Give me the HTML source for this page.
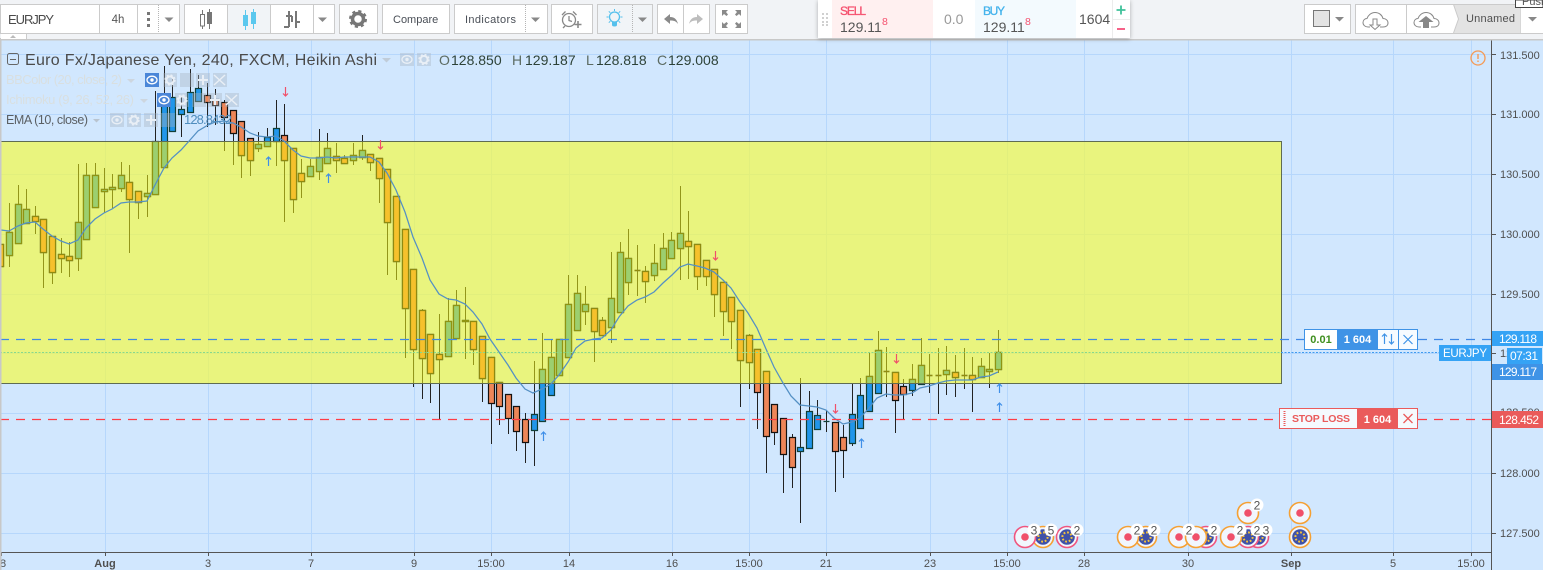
<!DOCTYPE html>
<html><head><meta charset="utf-8"><title>EURJPY</title>
<style>
html,body{margin:0;padding:0;background:#d1e7fe;overflow:hidden}
svg{display:block;font-family:"Liberation Sans",Arial,sans-serif}
</style></head><body>
<svg id="s" xmlns="http://www.w3.org/2000/svg" width="1543" height="570" viewBox="0 0 1543 570">
<defs>
<clipPath id="yc"><rect x="0" y="141" width="1281" height="242"/></clipPath>
<filter id="sh" x="-5%" y="-20%" width="110%" height="150%"><feDropShadow dx="0" dy="1" stdDeviation="2" flood-color="#000" flood-opacity=".3"/></filter>
<g id="dotP"><circle r="10.5" fill="#f1f6fd" stroke="currentColor" stroke-width="1.6"/><circle r="3.8" fill="#f0506a"/></g>
<g id="flagP"><circle r="10.5" fill="#f1f6fd" stroke="currentColor" stroke-width="1.6"/><circle r="7.8" fill="#3f51a8"/><circle r="4.6" fill="none" stroke="#f5c33b" stroke-width="2" stroke-dasharray="1.8 1.8"/></g>
<g id="eyeI"><ellipse rx="5" ry="3.800" fill="none" stroke="#e9eff6" stroke-width="1.300"/><circle r="1.700" fill="#e9eff6"/></g>
<g id="gearI"><circle r="3.600" fill="none" stroke="#e9eff6" stroke-width="2"/><circle r="5" fill="none" stroke="#e9eff6" stroke-width="1.300" stroke-dasharray="2 2"/></g>
</defs>
<rect width="1543" height="570" fill="#d1e7fe"/>
<!-- grid -->
<path stroke="#b6d7fc" stroke-width="1" fill="none" d="M105.5 40V552M208.5 40V552M311.5 40V552M414.5 40V552M491.5 40V552M569.5 40V552M672.5 40V552M749.5 40V552M826.5 40V552M930.5 40V552M1007.5 40V552M1084.5 40V552M1188.5 40V552M1291.5 40V552M1393.5 40V552M1471.5 40V552M0 54.5H1491M0 114.5H1491M0 174.5H1491M0 234.5H1491M0 294.5H1491M0 353.5H1491M0 413.5H1491M0 473.5H1491M0 533.5H1491"/>
<!-- yellow zone -->
<rect x="0" y="141" width="1281" height="242" fill="#f3fa47" fill-opacity=".7"/>
<g id="cblue"></g>
<g id="cyel" clip-path="url(#yc)"></g>
<rect x=".5" y="141.5" width="1281" height="242" fill="none" stroke="#5f6c52"/>
<!-- EMA -->
<path fill="none" stroke="#5490c4" stroke-width="1.25" d="M1 230L9 231L18 226L26 223L35 222L43 229L52 236L61 241L69 244L78 240L86 228L95 219L104 213L112 209L121 203L129 202L138 202L147 201L155 185L164 168L172 158L181 150L190 140L198 131L208 125L215 122L224 121L233 123L241 127L250 133L258 136L267 137L276 136L284 141L293 150L301 156L310 158L319 158L327 157L336 158L344 157L353 157L362 157L370 157L379 162L387 173L396 190L405 212L413 237L422 258L430 280L439 294L448 299L456 300L465 304L473 312L482 324L490 339L499 352L508 365L516 378L525 389L533 393L542 389L551 384L559 375L568 362L576 348L585 341L594 339L602 338L611 330L619 317L628 306L637 300L645 297L654 292L663 283L672 275L680 267L688 264L697 266L705 268L714 272L723 280L731 288L740 302L748 313L757 328L766 349L774 367L783 383L791 396L800 405L809 406L817 407L826 410L834 418L843 424L852 422L860 418L869 408L877 398L886 394L895 395L903 395L912 393L920 388L929 386L938 383L946 381L955 380L963 380L972 380L981 377L989 376L998 372"/>
<!-- price lines -->
<path stroke="#3f88e6" stroke-width="1.2" stroke-dasharray="9 7" fill="none" d="M0 339.5H1304M1418 339.5H1491"/>
<path stroke="#86d98e" stroke-dasharray="2 1.5" fill="none" d="M0 352.5H1281"/>
<path stroke="#3f9bf0" stroke-dasharray="2 1.5" fill="none" d="M1281 352.5H1439"/>
<path stroke="#ff3c46" stroke-width="1.3" stroke-dasharray="9 7" fill="none" d="M0 419.5H1279M1418 419.5H1491"/>
<!-- signal arrows -->
<g fill="none" stroke="#f0506a" stroke-width="1.2"><path d="M285.500 87V96M283 93.500L285.500 96L288 93.500M380.500 140V149M378 146.500L380.500 149L383 146.500M715.500 251V260M713 257.500L715.500 260L718 257.500M835.500 404V413M833 410.500L835.500 413L838 410.500M896.500 354V363M894 360.500L896.500 363L899 360.500"/></g>
<g fill="none" stroke="#3f8fe8" stroke-width="1.2"><path d="M268.500 166V157M266 159.500L268.500 157L271 159.500M328.500 183V174M326 176.500L328.500 174L331 176.500M543.500 441V432M541 434.500L543.500 432L546 434.500M861.500 448V439M859 441.500L861.500 439L864 441.500M999.500 393V384M997 386.500L999.500 384L1002 386.500M999.500 412V403M997 405.500L999.500 403L1002 405.500"/></g>

<!-- legend -->
<rect x="7.500" y="53.500" width="11" height="11" rx="2" fill="none" stroke="#666"/><path d="M10 59.500H16" stroke="#666"/>
<text x="25" y="65" font-size="16" fill="#4a4a4a" textLength="352" lengthAdjust="spacing">Euro Fx/Japanese Yen, 240, FXCM, Heikin Ashi</text>
<path d="M382 58h9l-4.500 4.500z" fill="#c0ccd8"/>
<g fill="#a9b4c0" fill-opacity=".38"><rect x="400" y="53" width="14" height="13"/><rect x="417" y="53" width="14" height="13"/></g>
<use href="#eyeI" x="407" y="59.500"/><use href="#gearI" x="424" y="59.500"/>
<g font-size="14" fill="#5c6b62"><text x="439" y="65">O</text><text x="512" y="65">H</text><text x="586" y="65">L</text><text x="657" y="65">C</text></g>
<g font-size="14" fill="#2d4238"><text x="451" y="65">128.850</text><text x="525" y="65">129.187</text><text x="596" y="65">128.818</text><text x="668" y="65">129.008</text></g>

<text x="6" y="84" font-size="13" fill="#d9dfe0" textLength="116">BBColor (20, close, 2)</text>
<text x="6" y="104" font-size="13" fill="#d9dfe0" textLength="128">Ichimoku (9, 26, 52, 26)</text>
<text x="6" y="124" font-size="12.500" fill="#5a5f63" textLength="82">EMA (10, close)</text>
<path d="M127 79h8l-4 4zM140 99h8l-4 4z" fill="#cdd6df"/><path d="M93 119h7l-3.500 3.500z" fill="#b9c4cf"/>
<rect x="145" y="73" width="14" height="14" fill="#4a86d8"/>
<ellipse cx="152" cy="80" rx="5" ry="3.800" fill="none" stroke="#fff" stroke-width="1.300"/><circle cx="152" cy="80" r="1.700" fill="#fff"/>
<rect x="157" y="93" width="14" height="14" fill="#4a86d8"/>
<ellipse cx="164" cy="100" rx="5" ry="3.800" fill="none" stroke="#fff" stroke-width="1.300"/><circle cx="164" cy="100" r="1.700" fill="#fff"/>
<g fill="#a9b4c0" fill-opacity=".38">
<rect x="163" y="73" width="14" height="14"/><rect x="180" y="73" width="14" height="14"/><rect x="196" y="73" width="14" height="14"/><rect x="213" y="73" width="14" height="14"/>
<rect x="175" y="93" width="14" height="14"/><rect x="192" y="93" width="14" height="14"/><rect x="208" y="93" width="14" height="14"/><rect x="225" y="93" width="14" height="14"/>
<rect x="110" y="113" width="14" height="14"/><rect x="127" y="113" width="14" height="14"/><rect x="144" y="113" width="14" height="14"/><rect x="161" y="113" width="14" height="14"/>
</g>
<use href="#gearI" x="170" y="80"/><use href="#gearI" x="182" y="100"/>
<path d="M214 75l11 10M225 75l-11 10M226 95l11 10M237 95l-11 10" stroke="#e9eff6" stroke-width="1.500" fill="none"/>
<path d="M198 80h10M203 75v10M210 100h10M215 95v10M146 120h10M151 115v10" stroke="#e9eff6" stroke-width="2"/>
<use href="#eyeI" x="117" y="120"/><use href="#gearI" x="134" y="120"/>
<text x="184" y="124" font-size="13" fill="#4f8dbd" textLength="48">128.8432</text>
<!-- warning -->
<circle cx="1478" cy="58" r="7" fill="none" stroke="#f59a55" stroke-width="1.300"/><path d="M1478 54v5M1478 60.500v1.500" stroke="#f59a55" stroke-width="1.400"/>

<!-- right scale -->
<path d="M1491.500 40V570" stroke="#555"/>
<path stroke="#555" d="M1492 54.500h4M1492 114.500h4M1492 174.500h4M1492 234.500h4M1492 294.500h4M1492 353.500h4M1492 413.500h4M1492 473.500h4M1492 533.500h4"/>
<g font-size="11" fill="#4f4f4f">
<text x="1500" y="59">131.500</text><text x="1500" y="118">131.000</text><text x="1500" y="178">130.500</text><text x="1500" y="238">130.000</text><text x="1500" y="298">129.500</text><text x="1500" y="357">129.000</text><text x="1500" y="416">128.500</text><text x="1500" y="477">128.000</text><text x="1500" y="537">127.500</text>
</g>
<!-- time axis -->
<path d="M0 552.500H1491.500" stroke="#555"/>
<path stroke="#555" d="M1.500 552v4M105.500 552v4M208.500 552v4M311.500 552v4M414.500 552v4M491.500 552v4M569.500 552v4M672.500 552v4M749.500 552v4M826.500 552v4M930.500 552v4M1007.500 552v4M1084.500 552v4M1188.500 552v4M1291.500 552v4M1393.500 552v4M1471.500 552v4"/>
<g font-size="11" fill="#4f4f4f" text-anchor="middle">
<text x="3" y="567">8</text><text x="105" y="567" font-weight="bold">Aug</text><text x="208" y="567">3</text><text x="311" y="567">7</text><text x="414" y="567">9</text><text x="491" y="567">15:00</text><text x="569" y="567">14</text><text x="672" y="567">16</text><text x="749" y="567">15:00</text><text x="826" y="567">21</text><text x="930" y="567">23</text><text x="1007" y="567">15:00</text><text x="1084" y="567">28</text><text x="1188" y="567">30</text><text x="1291" y="567" font-weight="bold">Sep</text><text x="1393" y="567">5</text><text x="1471" y="567">15:00</text>
</g>

<!-- events -->
<g>
<use href="#flagP" x="1043" y="537" color="#f5a033"/><use href="#dotP" x="1025" y="537" color="#f0557e"/>
<use href="#flagP" x="1067" y="537" color="#f0557e"/>
<use href="#flagP" x="1146" y="537" color="#f5a033"/><use href="#dotP" x="1128" y="537" color="#f5a033"/>
<use href="#flagP" x="1206" y="537" color="#f0557e"/><use href="#dotP" x="1179" y="537" color="#f5a033"/><use href="#dotP" x="1196" y="537" color="#f5a033"/>
<use href="#flagP" x="1258" y="537" color="#f0557e"/><use href="#flagP" x="1248" y="537" color="#f0557e"/><use href="#dotP" x="1231" y="537" color="#f5a033"/>
<use href="#dotP" x="1248" y="513" color="#f5a033"/>
<use href="#dotP" x="1300" y="513" color="#f5a033"/><use href="#flagP" x="1300" y="537" color="#f5a033"/>
</g>
<g fill="#fff"><circle cx="1034" cy="530" r="6.500"/><circle cx="1051" cy="530" r="6.500"/><circle cx="1077" cy="530" r="6.500"/><circle cx="1137" cy="530" r="6.500"/><circle cx="1154" cy="530" r="6.500"/><circle cx="1189" cy="530" r="6.500"/><circle cx="1214" cy="530" r="6.500"/><circle cx="1240" cy="530" r="6.500"/><circle cx="1257" cy="530" r="6.500"/><circle cx="1266" cy="530" r="6.500"/><circle cx="1257" cy="505" r="6.500"/></g>
<g font-size="12" fill="#555" text-anchor="middle"><text x="1034" y="534.500">3</text><text x="1051" y="534.500">5</text><text x="1077" y="534.500">2</text><text x="1137" y="534.500">2</text><text x="1154" y="534.500">2</text><text x="1189" y="534.500">2</text><text x="1214" y="534.500">2</text><text x="1240" y="534.500">2</text><text x="1257" y="534.500">2</text><text x="1266" y="534.500">3</text><text x="1257" y="509.500">2</text></g>

<!-- order widgets -->
<rect x="1304.500" y="329.500" width="113" height="20" fill="#f7fbff" stroke="#3f93e6"/>
<rect x="1305" y="330" width="32" height="19" fill="#fff"/>
<rect x="1337" y="330" width="41" height="19" fill="#3f93e6"/>
<path d="M1398.500 330v19" stroke="#3f93e6"/>
<text x="1321" y="343" font-size="11" font-weight="bold" fill="#3f8f1f" text-anchor="middle">0.01</text>
<text x="1357.500" y="343" font-size="11" font-weight="bold" fill="#fff" text-anchor="middle">1 604</text>
<path d="M1384.500 344V334M1382 336.500l2.500-2.500l2.500 2.500M1391.500 334V344M1389 341.500l2.500 2.500l2.500-2.500" fill="none" stroke="#3f93e6" stroke-width="1.200"/>
<path d="M1403.500 335l9 9M1412.500 335l-9 9" stroke="#3f93e6" stroke-width="1.200"/>

<rect x="1279.500" y="408.500" width="138" height="20" fill="#f5fafe" stroke="#ea5b5b"/>
<rect x="1357" y="409" width="41" height="19" fill="#ea5b5b"/>
<path d="M1284.500 411v15" stroke="#ea5b5b" stroke-dasharray="1 1" stroke-width="2"/>
<text x="1292" y="422" font-size="10.500" font-weight="bold" fill="#ea5b5b" textLength="58">STOP LOSS</text>
<text x="1377.500" y="423" font-size="11" font-weight="bold" fill="#fff" text-anchor="middle">1 604</text>
<path d="M1403.500 414l9 9M1412.500 414l-9 9" stroke="#ea5b5b" stroke-width="1.300"/>

<!-- price labels -->
<rect x="1492" y="331" width="51" height="15" fill="#35a3f5"/>
<text x="1499" y="343" font-size="12" fill="#fff" textLength="38">129.118</text>
<rect x="1439" y="345" width="52" height="16" fill="#35a3f5"/>
<text x="1443" y="357" font-size="11.500" fill="#fff" textLength="44">EURJPY</text>
<rect x="1507" y="348" width="35" height="16" fill="#35a3f5"/>
<text x="1510" y="360" font-size="12" fill="#fff" textLength="28">07:31</text>
<rect x="1492" y="364" width="51" height="16" fill="#3f93e6"/>
<text x="1499" y="376" font-size="12" fill="#fff" textLength="38">129.117</text>
<rect x="1492" y="411" width="51" height="17" fill="#ea5a5a"/>
<text x="1499" y="424" font-size="12" fill="#fff" textLength="40">128.452</text>

<!-- toolbar -->
<rect x="0" y="0" width="1543" height="39" fill="#f1f3f6"/>
<rect x="0" y="39" width="1543" height="1.500" fill="#c8c8c8"/>
<rect x="0" y="38" width="1.500" height="532" fill="#c8c8c8"/>
<path d="M1 33.500h25.500V39" fill="#fff" stroke="#ccc"/><rect x="1" y="34" width="25" height="5" fill="#fff"/>
<path d="M10 38l3-3l3 3z" fill="#bbb"/>
<g fill="#fff" stroke="#cbcbcb">
<rect x=".5" y="4.500" width="179" height="29"/>
<rect x="184.500" y="4.500" width="150" height="29"/>
<rect x="339.500" y="4.500" width="38" height="29"/>
<rect x="382.500" y="4.500" width="67" height="29"/>
<rect x="454.500" y="4.500" width="93" height="29"/>
<rect x="551.500" y="4.500" width="41" height="29"/>
<rect x="597.500" y="4.500" width="55" height="29" fill="#f1f4f7"/>
<rect x="657.500" y="4.500" width="52" height="29"/>
<rect x="715.500" y="4.500" width="32" height="29"/>
<rect x="1304.500" y="4.500" width="46" height="29"/>
<rect x="1355.500" y="4.500" width="190" height="29"/>
</g>
<rect x="228" y="5" width="42" height="28" fill="#f1f4f7"/>
<path d="M99.500 4v30M137.500 4v30M227.500 4v30M270.500 4v30M313.500 4v30M683.500 4v30M1406.500 4v30M1520.500 4v30" stroke="#cbcbcb"/>
<path d="M158.500 5v28M525.500 5v28M632.500 5v28" stroke="#b5b5b5" stroke-dasharray="1 1"/>
<text x="8" y="24" font-size="13" fill="#4a4a4a" textLength="46">EURJPY</text>
<text x="118" y="23" font-size="11.500" fill="#555" text-anchor="middle">4h</text>
<g fill="#777"><rect x="147" y="12" width="3" height="3"/><rect x="147" y="18" width="3" height="3"/><rect x="147" y="24" width="3" height="3"/></g>
<g fill="#888"><path d="M164.500 17.500h9l-4.500 4.500z"/><path d="M318 17.500h9l-4.500 4.500z"/><path d="M531 17.500h9l-4.500 4.500z"/><path d="M638 17.500h9l-4.500 4.500z"/><path d="M1335 17h9l-4.500 4.500z"/><path d="M1528 17h9l-4.500 4.500z"/></g>
<!-- candle icons -->
<path d="M202.500 10v4M202.500 26v3" stroke="#777"/><rect x="200.500" y="14.500" width="4" height="11.500" fill="#fff" stroke="#777"/>
<path d="M209.500 9v20" stroke="#777"/><rect x="207" y="12" width="5" height="12" fill="#777"/>
<path d="M245.500 10v20M253.500 9v20" stroke="#5bc8ee"/><rect x="243" y="15" width="5" height="11" fill="#5bc8ee"/><rect x="251" y="12" width="5" height="12" fill="#5bc8ee"/>
<path d="M289 11v16M284 27h5M286 16h6M292 16v6M296 11v17M296 22h4" fill="none" stroke="#777" stroke-width="2"/>
<!-- gear -->
<circle cx="358" cy="19" r="5.500" fill="none" stroke="#777" stroke-width="3.500"/>
<circle cx="358" cy="19" r="7.800" fill="none" stroke="#777" stroke-width="2.400" stroke-dasharray="3.100 3.030"/>
<text x="393" y="23" font-size="11" fill="#4a4f57">Compare</text>
<text x="465" y="23" font-size="11" fill="#4a4f57" textLength="51">Indicators</text>
<!-- alarm -->
<circle cx="569" cy="20" r="6.500" fill="none" stroke="#888" stroke-width="1.300"/>
<path d="M569 16v4.500l3 1M562 15l3.500-3.500M573 11.500l3.500 3.500M565 26l-2 2" fill="none" stroke="#888" stroke-width="1.300"/>
<path d="M578 21v7M574.500 24.500h7" stroke="#888" stroke-width="1.600"/>
<!-- bulb -->
<circle cx="614.500" cy="17" r="5" fill="none" stroke="#55c0ec" stroke-width="1.300"/>
<path d="M612 21.500h5v3.500c0 1-.8 1.500-2.500 1.500S612 26 612 25z" fill="#55c0ec"/>
<path d="M614.500 9v2M606.500 17h2M620.500 17h2M608.800 11.300l1.500 1.500M620.200 11.300l-1.500 1.500M608.800 22.700l1.500-1.500M620.200 22.700l-1.500-1.500" stroke="#55c0ec"/>
<!-- undo/redo -->
<path d="M664 19l6-5v3c5 0 7 3 8 7c-2-3-4-3.500-8-3.500v3.500z" fill="#8a8a8a"/>
<path d="M703 19l-6-5v3c-5 0-7 3-8 7c2-3 4-3.500 8-3.500v3.500z" fill="#bdbdbd"/>
<!-- fullscreen -->
<g fill="#8a8a8a"><path d="M722 10h6l-2 2l2 2.500l-1.500 1.500l-2.500-2l-2 2z"/><path d="M741 10h-6l2 2l-2 2.500l1.500 1.500l2.500-2l2 2z"/><path d="M722 28h6l-2-2l2-2.500l-1.500-1.500l-2.500 2l-2-2z"/><path d="M741 28h-6l2-2l-2-2.500l1.500-1.500l2.500 2l2-2z"/></g>

<!-- trading panel -->
<rect x="818" y="0" width="312" height="38" fill="#fff" filter="url(#sh)"/>
<rect x="832" y="0" width="101" height="38" fill="#fff0f0"/>
<rect x="975" y="0" width="101" height="38" fill="#f3fafe"/>
<path d="M1112.500 0v38M1112 19.500h18" stroke="#ececec"/>
<g fill="#d0d0d0"><rect x="822" y="13" width="2" height="2"/><rect x="826" y="13" width="2" height="2"/><rect x="822" y="17" width="2" height="2"/><rect x="826" y="17" width="2" height="2"/><rect x="822" y="21" width="2" height="2"/><rect x="826" y="21" width="2" height="2"/><rect x="822" y="24" width="2" height="2"/><rect x="826" y="24" width="2" height="2"/></g>
<text x="840" y="15" font-size="12" fill="#f5506e" stroke="#f5506e" stroke-width=".3" textLength="26">SELL</text>
<text x="840" y="32" font-size="14" fill="#555">129.11</text>
<text x="882" y="25" font-size="10.500" fill="#f5506e">8</text>
<text x="944" y="24" font-size="14" fill="#999">0.0</text>
<text x="983" y="15" font-size="12" fill="#44b3ec" stroke="#44b3ec" stroke-width=".3" textLength="22">BUY</text>
<text x="983" y="32" font-size="14" fill="#555">129.11</text>
<text x="1025" y="25" font-size="10.500" fill="#f5506e">8</text>
<text x="1079" y="24" font-size="14" fill="#555">1604</text>
<path d="M1116.500 10h9M1121 5.500v9" stroke="#3fc19a" stroke-width="1.800"/>
<path d="M1117 29h8" stroke="#f5507a" stroke-width="1.800"/>

<!-- right toolbar -->
<rect x="1313.500" y="10.500" width="16" height="16" fill="#e3e3e3" stroke="#777"/>
<path id="cl" d="M1370 27h-2c-3 0-5-2-5-4.500c0-2.500 2-4 4-4c1-3 4-6 8-6c4 0 7 2.500 8 6c3 0 5 2 5 4.500c0 2.500-2 4-5 4h-3" fill="#fff" stroke="#888"/>
<path d="M1377 19v6h3l-5 4.500l-5-4.500h3v-6z" fill="#fff" stroke="#888"/>
<path d="M1421 27h-2c-3 0-5-2-5-4.500c0-2.500 2-4 4-4c1-3 4-6 8-6c4 0 7 2.500 8 6c3 0 5 2 5 4.500c0 2.500-2 4-5 4h-3" fill="#fff" stroke="#888"/>
<path d="M1423 28v-6h-4.500l7.500-6l7.500 6h-4.500v6z" fill="#888"/>
<path d="M1453.500 5h67v28h-67l5-14z" fill="#e3e3e3"/>
<path d="M1453.500 4.500l5 14.500l-5 14" fill="#fff" stroke="#cbcbcb"/>
<text x="1466" y="22" font-size="11" fill="#4f4f4f" textLength="49">Unnamed</text>
<path d="M1515.500 7.500V0H1543V7.500z" fill="#fff" stroke="#444"/>
<text x="1522" y="5" font-size="11" fill="#555">Push</text>
</svg>
<script>
var D="d 225 244 267 271,u 203 232 256 267,u 185 204 244 244,u 189 209 224 224,d 206 216 222 234,d 219 219 253 288,d 236 236 273 284,d 238 254 259 273,d 242 256 261 277,u 164 222 259 271,u 163 175 240 240,u 163 175 208 208,u 168 189 192 213,u 174 187 190 208,u 162 175 189 192,d 165 182 200 253,d 191 191 203 219,u 175 193 197 217,u 91 141 195 195,u 66 97 168 168,u 79 97 132 132,u 96 109 115 137,u 69 92 113 113,u 75 88 102 102,d 83 95 103 127,d 89 99 106 125,d 100 102 118 151,d 110 110 134 165,d 121 121 156 178,d 138 138 161 176,u 132 144 149 152,u 128 137 147 147,u 100 128 142 166,d 104 135 161 222,d 148 148 200 213,d 159 173 182 198,u 159 166 177 177,u 129 157 172 180,u 133 148 164 164,d 143 156 161 173,d 155 158 164 164,u 143 155 161 165,u 135 150 158 160,d 154 154 163 171,d 158 158 179 203,d 169 169 223 275,d 196 196 262 280,d 229 229 309 358,d 269 269 350 387,d 309 310 359 399,d 334 334 374 403,d 314 354 360 419,u 298 321 357 357,u 290 305 339 339,u 287 320 322 359,d 321 321 350 365,d 336 336 379 402,d 357 357 404 444,d 382 382 407 425,d 394 394 419 434,d 406 406 432 451,d 413 419 443 463,u 361 414 431 466,u 333 369 422 422,u 339 357 396 396,u 339 339 376 376,u 275 304 358 358,u 275 293 331 331,u 286 304 312 325,d 308 308 332 362,d 317 320 336 336,u 252 298 328 343,u 242 252 313 313,u 229 258 283 295,d 245 270 271 296,d 266 271 282 303,u 244 263 276 281,u 233 248 270 270,u 232 240 259 259,u 186 233 249 280,d 211 241 247 279,d 244 244 277 290,d 260 260 277 286,d 269 269 295 317,d 282 282 312 336,d 297 297 322 349,d 310 310 361 407,d 334 335 363 389,d 349 349 393 429,d 371 371 437 473,d 404 404 433 445,d 418 418 455 493,d 434 437 468 488,u 378 447 452 523,u 391 411 449 449,u 400 415 430 430,u 410 421 422 432,d 422 422 452 492,d 425 437 451 478,u 383 414 444 446,u 378 395 429 429,u 352 376 412 412,u 331 350 394 394,d 347 371 372 397,d 372 372 401 433,d 379 386 395 419,u 364 379 391 396,u 338 365 385 385,d 354 375 376 393,d 348 375 376 414,u 346 370 375 395,d 355 372 378 397,d 348 375 376 389,d 357 375 380 412,u 358 366 378 378,u 353 369 372 388,u 330 352 370 373".split(",");
function build(wc,ub,us,db,ds){var w="",u="",d="";D.forEach(function(r,i){var p=r.split(" "),x=Math.floor(8.6*i+.9)+.5,a=+p[1],t=+p[2],b=+p[3],z=+p[4];w+="M"+x+" "+a+"V"+z;var s="M"+(x-3)+" "+(t+.5)+"h6v"+Math.max(b-t-1,0)+"h-6z";if(p[0]=="u")u+=s;else d+=s});
return '<path d="'+w+'" stroke="'+wc+'" fill="none"/><path d="'+u+'" fill="'+ub+'" stroke="'+us+'" stroke-width="1.2"/><path d="'+d+'" fill="'+db+'" stroke="'+ds+'" stroke-width="1.2"/>';}
function put(id,h){var g=document.getElementById(id),t=document.createElementNS("http://www.w3.org/2000/svg","svg");t.innerHTML=h;while(t.firstChild)g.appendChild(t.firstChild);}
put("cblue",build("#222","#2196ea","#123f38","#ee8658","#141210"));
put("cyel",build("#93951a","#9ccf6f","#8f9412","#f6c12c","#8f8a10"));
</script>
</body></html>
